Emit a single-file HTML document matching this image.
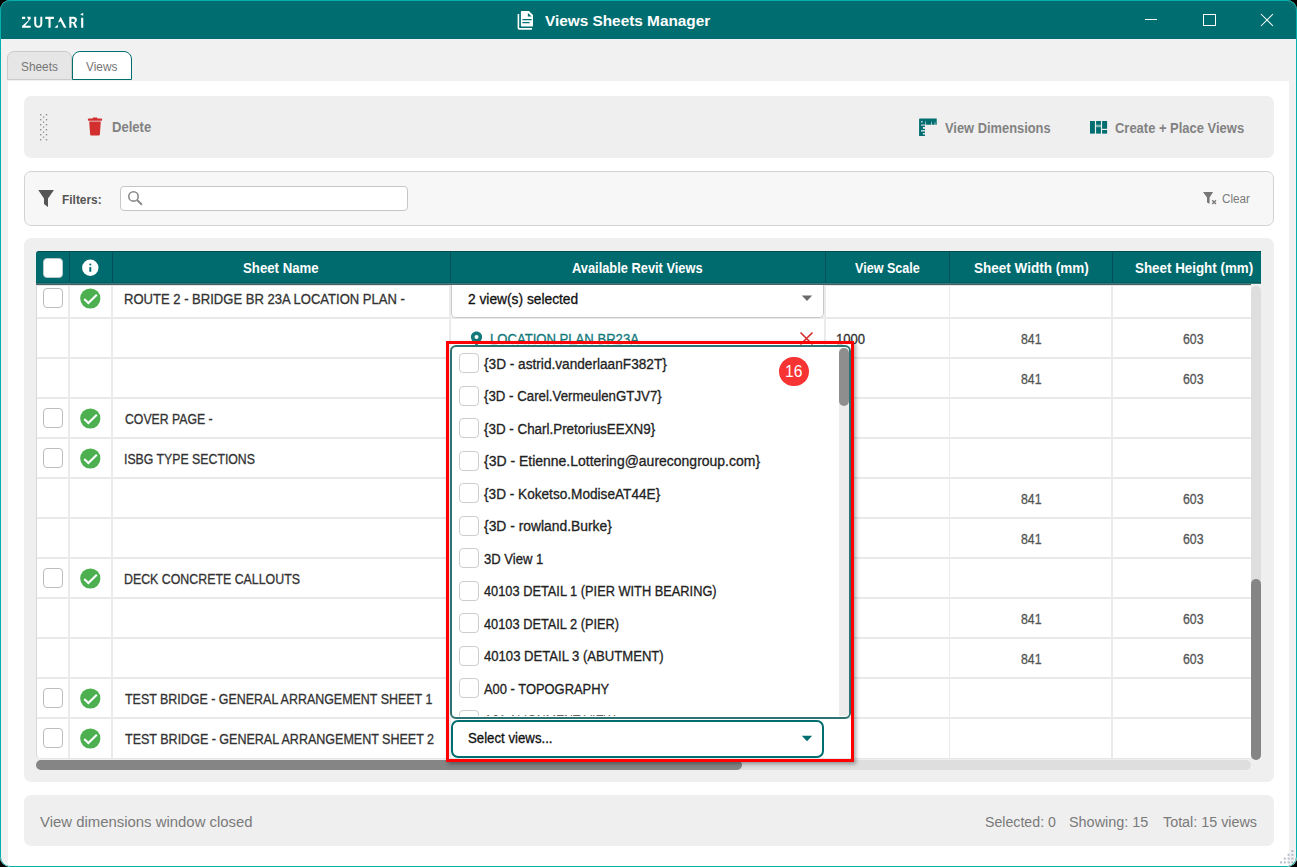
<!DOCTYPE html><html><head><meta charset="utf-8"><title>Views Sheets Manager</title><style>
*{margin:0;padding:0;box-sizing:border-box}
html,body{width:1297px;height:867px;overflow:hidden;background:#000;font-family:"Liberation Sans", sans-serif}
.win{position:absolute;left:0;top:0;width:1297px;height:867px;border-radius:10px;background:#f1f1f1;overflow:hidden}
.abs{position:absolute}
.t{position:absolute;white-space:nowrap;line-height:1;transform-origin:0 0}
.n{-webkit-text-stroke:0.3px currentColor}
.cb{position:absolute;width:20px;height:20px;border:1px solid #bdbdbd;border-radius:4px;background:#fff}
svg{position:absolute;overflow:visible}
</style></head><body><div class="win"><div class="abs" style="left:0px;top:0px;width:1297px;height:38.5px;background:#006e70"></div><svg style="left:0;top:0" width="120" height="38" viewBox="0 0 120 38">
<g fill="#fff">
<path d="M22.05 16.7h3.2v2.2h-3.2z"/>
<path d="M26.9 16.7h3.8v2.1l-1.9 1.4z"/>
<path d="M28.6 20.3l2.1-1.5-5.6 6.9h5.6v2.1h-8.65v-1.9z"/>
<path d="M34.2 16.7h2v6.7c0 1.6.9 2.5 2.05 2.5s2.05-.9 2.05-2.5v-6.7h2v6.8c0 2.8-1.7 4.35-4.05 4.35s-4.05-1.55-4.05-4.35z"/>
<path d="M45.25 16.7h8.65v2.2h-3.3v8.9h-2.1v-8.9h-3.25z"/>
<path d="M54.4 27.8h3.5v-3.3z"/>
<path d="M60.6 16.8l5.9 11h-2.5l-3.4-6.6-2.7 1.6z"/>
<path d="M69.3 16.7h4.1c2.2 0 3.5 1.3 3.5 3.1 0 1.4-.7 2.4-1.9 2.9l2.3 5.1h-2.3l-2.1-4.6h-1.5v4.6h-2.1zM71.4 18.7v3.4h1.8c1 0 1.6-.6 1.6-1.7s-.6-1.7-1.6-1.7z"/>
<path d="M81.15 17.8h2.1v10h-2.1z"/>
<path d="M83.2 12.7v3.1l-3.1-1.2z"/>
</g></svg><svg style="left:515px;top:9px" width="22" height="22" viewBox="0 0 22 22">
<path d="M3.4 5V19c0 .5.3.85.85.85H17" fill="none" stroke="#fff" stroke-width="1.6"/>
<path d="M6.9 1.9H13.9L18 6.1V16.6c0 .6-.4 1-1 1H6.9c-.6 0-1-.4-1-1V2.9c0-.6.4-1 1-1z" fill="#fff"/>
<path d="M12.9 3.9v3.5h3.8z" fill="#006e70"/>
<rect x="7.3" y="10" width="9.5" height="1.2" rx="0.5" fill="#006e70"/>
<rect x="7.3" y="13.1" width="7.4" height="1.2" rx="0.5" fill="#006e70"/>
</svg><div class="t" id="t0" style="left:544.80px;top:13.18px;font-size:15.5px;color:#fff;font-weight:bold;transform:scaleX(0.9903);">Views Sheets Manager</div><div class="abs" style="left:1145px;top:19px;width:12px;height:1px;background:#fff"></div><div class="abs" style="left:1203px;top:14px;width:12.5px;height:12px;border:1px solid #fff"></div><svg style="left:1260px;top:13px" width="14" height="14" viewBox="0 0 14 14"><path d="M1 1L13 13M13 1L1 13" stroke="#fff" stroke-width="1.05"/></svg><div class="abs" style="left:7px;top:51px;width:65px;height:29px;background:#e6e6e6;border:1px solid #cbcbcb;border-radius:7px 7px 0 0"></div><div class="abs" style="left:71.5px;top:51px;width:60.80000000000001px;height:29px;background:#fff;border:1.5px solid #006e70;border-radius:8px 8px 0 0"></div><div class="t" id="t1" style="left:21.00px;top:59.80px;font-size:13px;color:#767676;font-weight:normal;transform:scaleX(0.9104);">Sheets</div><div class="t" id="t2" style="left:86.40px;top:59.80px;font-size:13px;color:#767676;font-weight:normal;transform:scaleX(0.9101);">Views</div><div class="abs" style="left:8px;top:80.8px;width:1281px;height:786.2px;background:#fff"></div><div class="abs" style="left:24px;top:96px;width:1250px;height:61.5px;background:#efefef;border-radius:7px"></div><svg style="left:40px;top:0" width="10" height="150"><g fill="#8f8f8f"><rect x="0" y="114" width="1.4" height="1.4"/><rect x="5.8" y="114" width="1.4" height="1.4"/><rect x="2.9" y="116.5" width="1.3" height="1.3"/><rect x="0" y="119" width="1.4" height="1.4"/><rect x="5.8" y="119" width="1.4" height="1.4"/><rect x="2.9" y="121.5" width="1.3" height="1.3"/><rect x="0" y="124" width="1.4" height="1.4"/><rect x="5.8" y="124" width="1.4" height="1.4"/><rect x="2.9" y="126.5" width="1.3" height="1.3"/><rect x="0" y="129" width="1.4" height="1.4"/><rect x="5.8" y="129" width="1.4" height="1.4"/><rect x="2.9" y="131.5" width="1.3" height="1.3"/><rect x="0" y="134" width="1.4" height="1.4"/><rect x="5.8" y="134" width="1.4" height="1.4"/><rect x="2.9" y="136.5" width="1.3" height="1.3"/><rect x="0" y="139" width="1.4" height="1.4"/><rect x="5.8" y="139" width="1.4" height="1.4"/></g></svg><svg style="left:86px;top:116px" width="18" height="22" viewBox="0 0 18 22">
<rect x="2" y="2.6" width="14" height="2.2" rx="0.6" fill="#d32f2f"/>
<rect x="6.6" y="1.6" width="4.8" height="1.6" rx="0.6" fill="#d32f2f"/>
<path d="M3.2 5.6h11.6l-0.9 12.6c-.1.9-.7 1.4-1.6 1.4H5.7c-.9 0-1.5-.5-1.6-1.4z" fill="#d32f2f"/>
</svg><div class="t" id="t3" style="left:111.60px;top:120.15px;font-size:14px;color:#828282;font-weight:bold;transform:scaleX(0.9329);">Delete</div><svg style="left:912px;top:112px" width="30" height="30" viewBox="0 0 30 30">
<path d="M8.1 6.4H24.7V12.8H13V23.9H7.1V7.4c0-.6.4-1 1-1z" fill="#006e70"/>
<g fill="#efefef">
<path d="M13.2 12.8l.5-4.5.5 4.5z"/><path d="M18.9 12.8l.5-4.2.5 4.2z"/><path d="M22.5 12.8l.5-3.5.5 3.5z"/>
<rect x="9" y="9.3" width="1.7" height="1.1"/>
<rect x="9" y="12.6" width="4" height="1"/>
<rect x="10.9" y="15" width="2.1" height="1.8"/>
<rect x="9" y="18" width="4" height="1.6" opacity="0.8"/>
<rect x="10.9" y="21.1" width="2.1" height="1.4"/>
</g></svg><div class="t" id="t4" style="left:944.50px;top:120.65px;font-size:14px;color:#828282;font-weight:bold;transform:scaleX(0.9192);">View Dimensions</div><svg style="left:1090px;top:121px" width="18" height="13" viewBox="0 0 18 13">
<g fill="#006e70">
<rect x="0" y="0" width="4.9" height="12.6"/>
<rect x="6.1" y="0" width="4.8" height="3.8"/>
<rect x="6.1" y="3.8" width="4.8" height="2.3" opacity="0.45"/>
<rect x="6.1" y="6.1" width="4.8" height="6.5"/>
<rect x="12.1" y="0" width="5" height="7.8"/>
<rect x="12.1" y="9" width="5" height="3.6"/>
</g></svg><div class="t" id="t5" style="left:1115.00px;top:120.65px;font-size:14px;color:#828282;font-weight:bold;transform:scaleX(0.9258);">Create + Place Views</div><div class="abs" style="left:24px;top:171px;width:1250px;height:55px;background:#f7f7f7;border:1px solid #d3d3d3;border-radius:7px"></div><svg style="left:38px;top:189px" width="17" height="19" viewBox="0 0 17 19">
<path d="M0.6 1.4c-.4-.3-.2-.5.3-.5h14.4c.5 0 .7.2.3.5L10 9.4v8.2c0 .3-.3.4-.5.2L6.3 15.3c-.2-.1-.3-.3-.3-.5V9.4z" fill="#555"/>
</svg><div class="t" id="t6" style="left:61.60px;top:192.60px;font-size:13px;color:#555;font-weight:bold;transform:scaleX(0.9160);">Filters:</div><div class="abs" style="left:120px;top:186px;width:288px;height:25px;background:#fff;border:1px solid #c6c6c6;border-radius:4px"></div><svg style="left:127px;top:190px" width="18" height="18" viewBox="0 0 18 18">
<circle cx="6.5" cy="6.4" r="4.7" fill="none" stroke="#8a8a8a" stroke-width="1.6"/>
<path d="M10 10l5 4.7" stroke="#8a8a8a" stroke-width="1.9"/>
</svg><svg style="left:1202px;top:191px" width="18" height="16" viewBox="0 0 18 16">
<path d="M1 1.1h10.1l-3.5 5.5v6.1l-2.6-1.2V6.6z" fill="#777"/>
<path d="M10.2 9.2l3.8 3.8M14 9.2l-3.8 3.8" stroke="#777" stroke-width="1.3"/>
</svg><div class="t" id="t7" style="left:1222.00px;top:193.42px;font-size:12.5px;color:#7a7a7a;font-weight:normal;transform:scaleX(0.9358);">Clear</div><div class="abs" style="left:24px;top:238px;width:1250px;height:543.5px;background:#efefef;border-radius:7px"></div><div class="abs" style="left:36px;top:284px;width:1215px;height:474.5px;background:#fff;border-left:1px solid #d9d9d9;border-bottom:1px solid #e6e6e6;border-radius:0 0 0 5px"></div><div class="abs" style="left:37px;top:317.1px;width:1214px;height:2.099999999999966px;background:#e9e9e9"></div><div class="abs" style="left:37px;top:357.1px;width:1214px;height:2.099999999999966px;background:#e9e9e9"></div><div class="abs" style="left:37px;top:397.1px;width:1214px;height:2.099999999999966px;background:#e9e9e9"></div><div class="abs" style="left:37px;top:437.1px;width:1214px;height:2.099999999999966px;background:#e9e9e9"></div><div class="abs" style="left:37px;top:477.1px;width:1214px;height:2.099999999999966px;background:#e9e9e9"></div><div class="abs" style="left:37px;top:517.1px;width:1214px;height:2.1000000000000227px;background:#e9e9e9"></div><div class="abs" style="left:37px;top:557.1px;width:1214px;height:2.1000000000000227px;background:#e9e9e9"></div><div class="abs" style="left:37px;top:597.1px;width:1214px;height:2.1000000000000227px;background:#e9e9e9"></div><div class="abs" style="left:37px;top:637.1px;width:1214px;height:2.1000000000000227px;background:#e9e9e9"></div><div class="abs" style="left:37px;top:677.1px;width:1214px;height:2.1000000000000227px;background:#e9e9e9"></div><div class="abs" style="left:37px;top:717.1px;width:1214px;height:2.1000000000000227px;background:#e9e9e9"></div><div class="abs" style="left:68.1px;top:284px;width:1.8000000000000114px;height:474px;background:#ebebeb"></div><div class="abs" style="left:111.1px;top:284px;width:1.8000000000000114px;height:474px;background:#ebebeb"></div><div class="abs" style="left:449.1px;top:284px;width:1.7999999999999545px;height:474px;background:#ebebeb"></div><div class="abs" style="left:824.1px;top:284px;width:1.7999999999999545px;height:474px;background:#ebebeb"></div><div class="abs" style="left:948.6px;top:284px;width:1.7999999999999545px;height:474px;background:#ebebeb"></div><div class="abs" style="left:1111.1px;top:284px;width:1.800000000000182px;height:474px;background:#ebebeb"></div><div class="abs" style="left:36px;top:251px;width:1225px;height:31px;background:#006b6e;border-radius:3px 0 0 0;border-top:1px solid #014c4f"></div><div class="abs" style="left:36px;top:282px;width:1225px;height:1px;background:#06595c"></div><div class="abs" style="left:36px;top:283px;width:1225px;height:1px;background:#2f7f81"></div><div class="abs" style="left:36px;top:284px;width:1215px;height:1px;background:#4a5d60"></div><div class="abs" style="left:36px;top:285px;width:1215px;height:1px;background:#e4e4e4"></div><div class="abs" style="left:68.5px;top:252px;width:1.2999999999999972px;height:30px;background:#03505a"></div><div class="abs" style="left:111.5px;top:252px;width:1.2999999999999972px;height:30px;background:#03505a"></div><div class="abs" style="left:449.5px;top:252px;width:1.3000000000000114px;height:30px;background:#03505a"></div><div class="abs" style="left:824.5px;top:252px;width:1.2999999999999545px;height:30px;background:#03505a"></div><div class="abs" style="left:949.0px;top:252px;width:1.2999999999999545px;height:30px;background:#03505a"></div><div class="abs" style="left:1111.5px;top:252px;width:1.2999999999999545px;height:30px;background:#03505a"></div><div class="abs" style="left:43px;top:258px;width:20px;height:20px;background:#fff;border:1px solid #b7c9c9;border-radius:4px"></div><svg style="left:82px;top:260px" width="17" height="17" viewBox="0 0 17 17">
<circle cx="8.3" cy="7.75" r="8.2" fill="#fff"/>
<circle cx="8.3" cy="4.5" r="1.05" fill="#006b6e"/>
<rect x="7.35" y="7.1" width="1.9" height="4.7" fill="#006b6e"/>
</svg><div class="t" id="t8" style="left:243.10px;top:260.95px;font-size:14px;color:#fff;font-weight:bold;transform:scaleX(0.9445);">Sheet Name</div><div class="t" id="t9" style="left:572.10px;top:260.75px;font-size:14px;color:#fff;font-weight:bold;transform:scaleX(0.9171);">Available Revit Views</div><div class="t" id="t10" style="left:855.00px;top:260.75px;font-size:14px;color:#fff;font-weight:bold;transform:scaleX(0.8985);">View Scale</div><div class="t" id="t11" style="left:973.70px;top:260.75px;font-size:14px;color:#fff;font-weight:bold;transform:scaleX(0.9644);">Sheet Width (mm)</div><div class="t" id="t12" style="left:1134.50px;top:260.75px;font-size:14px;color:#fff;font-weight:bold;transform:scaleX(0.9552);">Sheet Height (mm)</div><div class="cb" style="left:43px;top:288px"></div><svg style="left:80px;top:287.5px" width="21" height="21" viewBox="0 0 21 21"><circle cx="10.3" cy="10.5" r="10.1" fill="#4caf50"/><path d="M4.2 10.9l4.2 4.2 8.4-8.4" fill="none" stroke="#fff" stroke-width="2.1"/></svg><div class="t n" id="t13" style="left:123.77px;top:291.95px;font-size:14px;color:#333;font-weight:normal;transform:scaleX(0.9314);">ROUTE 2 - BRIDGE BR 23A LOCATION PLAN -</div><div class="t n" id="t14" style="left:1020.80px;top:331.95px;font-size:14px;color:#555;font-weight:normal;transform:scaleX(0.8782);">841</div><div class="t n" id="t15" style="left:1182.50px;top:331.95px;font-size:14px;color:#555;font-weight:normal;transform:scaleX(0.8782);">603</div><div class="t n" id="t16" style="left:1020.80px;top:371.95px;font-size:14px;color:#555;font-weight:normal;transform:scaleX(0.8782);">841</div><div class="t n" id="t17" style="left:1182.50px;top:371.95px;font-size:14px;color:#555;font-weight:normal;transform:scaleX(0.8782);">603</div><div class="cb" style="left:43px;top:408px"></div><svg style="left:80px;top:407.5px" width="21" height="21" viewBox="0 0 21 21"><circle cx="10.3" cy="10.5" r="10.1" fill="#4caf50"/><path d="M4.2 10.9l4.2 4.2 8.4-8.4" fill="none" stroke="#fff" stroke-width="2.1"/></svg><div class="t n" id="t18" style="left:124.70px;top:411.95px;font-size:14px;color:#333;font-weight:normal;transform:scaleX(0.8762);">COVER PAGE -</div><div class="cb" style="left:43px;top:448px"></div><svg style="left:80px;top:447.5px" width="21" height="21" viewBox="0 0 21 21"><circle cx="10.3" cy="10.5" r="10.1" fill="#4caf50"/><path d="M4.2 10.9l4.2 4.2 8.4-8.4" fill="none" stroke="#fff" stroke-width="2.1"/></svg><div class="t n" id="t19" style="left:123.82px;top:451.95px;font-size:14px;color:#333;font-weight:normal;transform:scaleX(0.8782);">ISBG TYPE SECTIONS</div><div class="t n" id="t20" style="left:1020.80px;top:491.95px;font-size:14px;color:#555;font-weight:normal;transform:scaleX(0.8782);">841</div><div class="t n" id="t21" style="left:1182.50px;top:491.95px;font-size:14px;color:#555;font-weight:normal;transform:scaleX(0.8782);">603</div><div class="t n" id="t22" style="left:1020.80px;top:531.95px;font-size:14px;color:#555;font-weight:normal;transform:scaleX(0.8782);">841</div><div class="t n" id="t23" style="left:1182.50px;top:531.95px;font-size:14px;color:#555;font-weight:normal;transform:scaleX(0.8782);">603</div><div class="cb" style="left:43px;top:568px"></div><svg style="left:80px;top:567.5px" width="21" height="21" viewBox="0 0 21 21"><circle cx="10.3" cy="10.5" r="10.1" fill="#4caf50"/><path d="M4.2 10.9l4.2 4.2 8.4-8.4" fill="none" stroke="#fff" stroke-width="2.1"/></svg><div class="t n" id="t24" style="left:123.82px;top:571.95px;font-size:14px;color:#333;font-weight:normal;transform:scaleX(0.8837);">DECK CONCRETE CALLOUTS</div><div class="t n" id="t25" style="left:1020.80px;top:611.95px;font-size:14px;color:#555;font-weight:normal;transform:scaleX(0.8782);">841</div><div class="t n" id="t26" style="left:1182.50px;top:611.95px;font-size:14px;color:#555;font-weight:normal;transform:scaleX(0.8782);">603</div><div class="t n" id="t27" style="left:1020.80px;top:651.95px;font-size:14px;color:#555;font-weight:normal;transform:scaleX(0.8782);">841</div><div class="t n" id="t28" style="left:1182.50px;top:651.95px;font-size:14px;color:#555;font-weight:normal;transform:scaleX(0.8782);">603</div><div class="cb" style="left:43px;top:688px"></div><svg style="left:80px;top:687.5px" width="21" height="21" viewBox="0 0 21 21"><circle cx="10.3" cy="10.5" r="10.1" fill="#4caf50"/><path d="M4.2 10.9l4.2 4.2 8.4-8.4" fill="none" stroke="#fff" stroke-width="2.1"/></svg><div class="t n" id="t29" style="left:124.70px;top:691.95px;font-size:14px;color:#333;font-weight:normal;transform:scaleX(0.8890);">TEST BRIDGE - GENERAL ARRANGEMENT SHEET 1</div><div class="cb" style="left:43px;top:728px"></div><svg style="left:80px;top:727.5px" width="21" height="21" viewBox="0 0 21 21"><circle cx="10.3" cy="10.5" r="10.1" fill="#4caf50"/><path d="M4.2 10.9l4.2 4.2 8.4-8.4" fill="none" stroke="#fff" stroke-width="2.1"/></svg><div class="t n" id="t30" style="left:124.70px;top:731.95px;font-size:14px;color:#333;font-weight:normal;transform:scaleX(0.8941);">TEST BRIDGE - GENERAL ARRANGEMENT SHEET 2</div><div class="abs" style="left:450.5px;top:284.5px;width:373.5px;height:33.5px;background:#fff;border:1px solid #c9c9c9;border-top:none;border-radius:0 0 5px 5px"></div><svg style="left:801px;top:295px" width="12" height="7" viewBox="0 0 12 7"><path d="M0.8 0.6h10.4L6 6z" fill="#6a6a6a"/></svg><div class="t n" id="t31" style="left:468.00px;top:291.75px;font-size:14px;color:#111;font-weight:normal;transform:scaleX(0.9833);">2 view(s) selected</div><svg style="left:470px;top:331px" width="14" height="16" viewBox="0 0 14 16"><path d="M6.5 0.5c3.2 0 5.6 2.4 5.6 5.5 0 3.6-5.6 9-5.6 9S0.9 9.6 0.9 6C0.9 2.9 3.3.5 6.5.5z" fill="#137a7c"/><circle cx="6.5" cy="6" r="2" fill="#fff"/></svg><div class="t n" id="t32" style="left:489.96px;top:331.95px;font-size:14px;color:#137a7c;font-weight:normal;transform:scaleX(0.9352);">LOCATION PLAN BR23A</div><svg style="left:799px;top:331px" width="15" height="15" viewBox="0 0 15 15"><path d="M1.5 1.5L13.5 13.5M13.5 1.5L1.5 13.5" stroke="#d42b2b" stroke-width="1.6"/></svg><div class="t n" id="t33" style="left:835.77px;top:331.75px;font-size:14px;color:#333;font-weight:normal;transform:scaleX(0.9322);">1000</div><div class="abs" style="left:1251px;top:286px;width:10px;height:474px;background:#dedede;border-radius:5px"></div><div class="abs" style="left:1251px;top:579px;width:10px;height:181px;background:#858585;border-radius:5px"></div><div class="abs" style="left:36px;top:760px;width:1215px;height:10px;background:#dedede;border-radius:5px"></div><div class="abs" style="left:36px;top:760px;width:706px;height:10px;background:#858585;border-radius:5px"></div><div class="abs" style="left:446.2px;top:341.3px;width:408.00000000000006px;height:420.7px;border:3.7px solid #ff0000;background:transparent;box-shadow:2px 2px 4px rgba(0,0,0,0.35)"></div><div class="abs" style="left:449.8px;top:344.8px;width:401.2px;height:374.2px;background:#fff;border:2.6px solid #2e7272;border-radius:6px"></div><div class="abs" style="left:839px;top:348px;width:10px;height:368px;background:#ececec;border-radius:0 4px 4px 0"></div><div class="abs" style="left:839px;top:348px;width:10px;height:57.5px;background:#8e8e8e;border-radius:5px"></div><div class="cb" style="left:459px;top:353.4px;width:20px;height:20px;border-color:#cdcdcd"></div><div class="t n" id="t34" style="left:484.20px;top:356.65px;font-size:14px;color:#222;font-weight:normal;transform:scaleX(0.9746);">{3D - astrid.vanderlaanF382T}</div><div class="cb" style="left:459px;top:385.9px;width:20px;height:20px;border-color:#cdcdcd"></div><div class="t n" id="t35" style="left:484.20px;top:389.15px;font-size:14px;color:#222;font-weight:normal;transform:scaleX(0.9475);">{3D - Carel.VermeulenGTJV7}</div><div class="cb" style="left:459px;top:418.4px;width:20px;height:20px;border-color:#cdcdcd"></div><div class="t n" id="t36" style="left:484.20px;top:421.65px;font-size:14px;color:#222;font-weight:normal;transform:scaleX(0.9566);">{3D - Charl.PretoriusEEXN9}</div><div class="cb" style="left:459px;top:450.9px;width:20px;height:20px;border-color:#cdcdcd"></div><div class="t n" id="t37" style="left:484.20px;top:454.15px;font-size:14px;color:#222;font-weight:normal;transform:scaleX(0.9985);">{3D - Etienne.Lottering@aurecongroup.com}</div><div class="cb" style="left:459px;top:483.4px;width:20px;height:20px;border-color:#cdcdcd"></div><div class="t n" id="t38" style="left:484.20px;top:486.65px;font-size:14px;color:#222;font-weight:normal;transform:scaleX(0.9731);">{3D - Koketso.ModiseAT44E}</div><div class="cb" style="left:459px;top:515.9px;width:20px;height:20px;border-color:#cdcdcd"></div><div class="t n" id="t39" style="left:484.20px;top:519.15px;font-size:14px;color:#222;font-weight:normal;transform:scaleX(0.9892);">{3D - rowland.Burke}</div><div class="cb" style="left:459px;top:548.4px;width:20px;height:20px;border-color:#cdcdcd"></div><div class="t n" id="t40" style="left:484.20px;top:551.65px;font-size:14px;color:#222;font-weight:normal;transform:scaleX(0.9346);">3D View 1</div><div class="cb" style="left:459px;top:580.9px;width:20px;height:20px;border-color:#cdcdcd"></div><div class="t n" id="t41" style="left:484.20px;top:584.15px;font-size:14px;color:#222;font-weight:normal;transform:scaleX(0.9144);">40103 DETAIL 1 (PIER WITH BEARING)</div><div class="cb" style="left:459px;top:613.4px;width:20px;height:20px;border-color:#cdcdcd"></div><div class="t n" id="t42" style="left:484.20px;top:616.65px;font-size:14px;color:#222;font-weight:normal;transform:scaleX(0.9140);">40103 DETAIL 2 (PIER)</div><div class="cb" style="left:459px;top:645.9px;width:20px;height:20px;border-color:#cdcdcd"></div><div class="t n" id="t43" style="left:484.20px;top:649.15px;font-size:14px;color:#222;font-weight:normal;transform:scaleX(0.9353);">40103 DETAIL 3 (ABUTMENT)</div><div class="cb" style="left:459px;top:678.4px;width:20px;height:20px;border-color:#cdcdcd"></div><div class="t n" id="t44" style="left:484.20px;top:681.65px;font-size:14px;color:#222;font-weight:normal;transform:scaleX(0.9227);">A00 - TOPOGRAPHY</div><div class="abs" style="left:452px;top:700px;width:386px;height:15.8px;overflow:hidden"><div class="cb" style="left:7px;top:10px;border-color:#cdcdcd"></div><div class="t" style="left:32px;top:12.9px;font-size:14px;color:#666;transform:scaleX(0.88)">A01 ALIGNMENT VIEW</div></div><div class="abs" style="left:779px;top:356.7px;width:29.6px;height:29.6px;border-radius:50%;background:#f83333"></div><div class="t" id="t45" style="left:784.52px;top:363.76px;font-size:16px;color:#fff;font-weight:normal;transform:scaleX(0.9764);">16</div><div class="abs" style="left:824px;top:719px;width:26px;height:39px;background:#fff"></div><div class="abs" style="left:451px;top:719.5px;width:373px;height:38.5px;background:#fff;border:2.2px solid #006d70;border-radius:7px"></div><svg style="left:801px;top:735px" width="12" height="7" viewBox="0 0 12 7"><path d="M0.8 0.8h10.4L6 6.2z" fill="#006d70"/></svg><div class="t n" id="t46" style="left:468.30px;top:731.45px;font-size:14px;color:#111;font-weight:normal;transform:scaleX(0.9448);">Select views...</div><div class="abs" style="left:24px;top:795px;width:1250px;height:50.5px;background:#efefef;border-radius:7px"></div><div class="t" id="t47" style="left:40.40px;top:814.65px;font-size:14px;color:#7a7a7a;font-weight:normal;transform:scaleX(1.0646);">View dimensions window closed</div><div class="t" id="t48" style="left:985.30px;top:815.15px;font-size:14px;color:#7a7a7a;font-weight:normal;transform:scaleX(1.0119);">Selected: 0</div><div class="t" id="t49" style="left:1069.40px;top:815.15px;font-size:14px;color:#7a7a7a;font-weight:normal;transform:scaleX(1.0289);">Showing: 15</div><div class="t" id="t50" style="left:1163.00px;top:815.15px;font-size:14px;color:#7a7a7a;font-weight:normal;transform:scaleX(1.0237);">Total: 15 views</div><div class="abs" style="left:1289px;top:38.5px;width:8px;height:828.5px;background:#f1f1f1"></div><svg style="left:1280px;top:850px" width="16" height="16"><g fill="#b3bbcb"><rect x="11.4" y="0.0" width="2" height="2"/><rect x="7.6" y="3.8" width="2" height="2"/><rect x="11.4" y="3.8" width="2" height="2"/><rect x="3.8" y="7.6" width="2" height="2"/><rect x="7.6" y="7.6" width="2" height="2"/><rect x="11.4" y="7.6" width="2" height="2"/><rect x="0.0" y="11.4" width="2" height="2"/><rect x="3.8" y="11.4" width="2" height="2"/><rect x="7.6" y="11.4" width="2" height="2"/><rect x="11.4" y="11.4" width="2" height="2"/></g></svg><div class="abs" style="left:0;top:0;width:1297px;height:867px;border:1.2px solid #08b0ad;border-radius:10px"></div></div></body></html>
